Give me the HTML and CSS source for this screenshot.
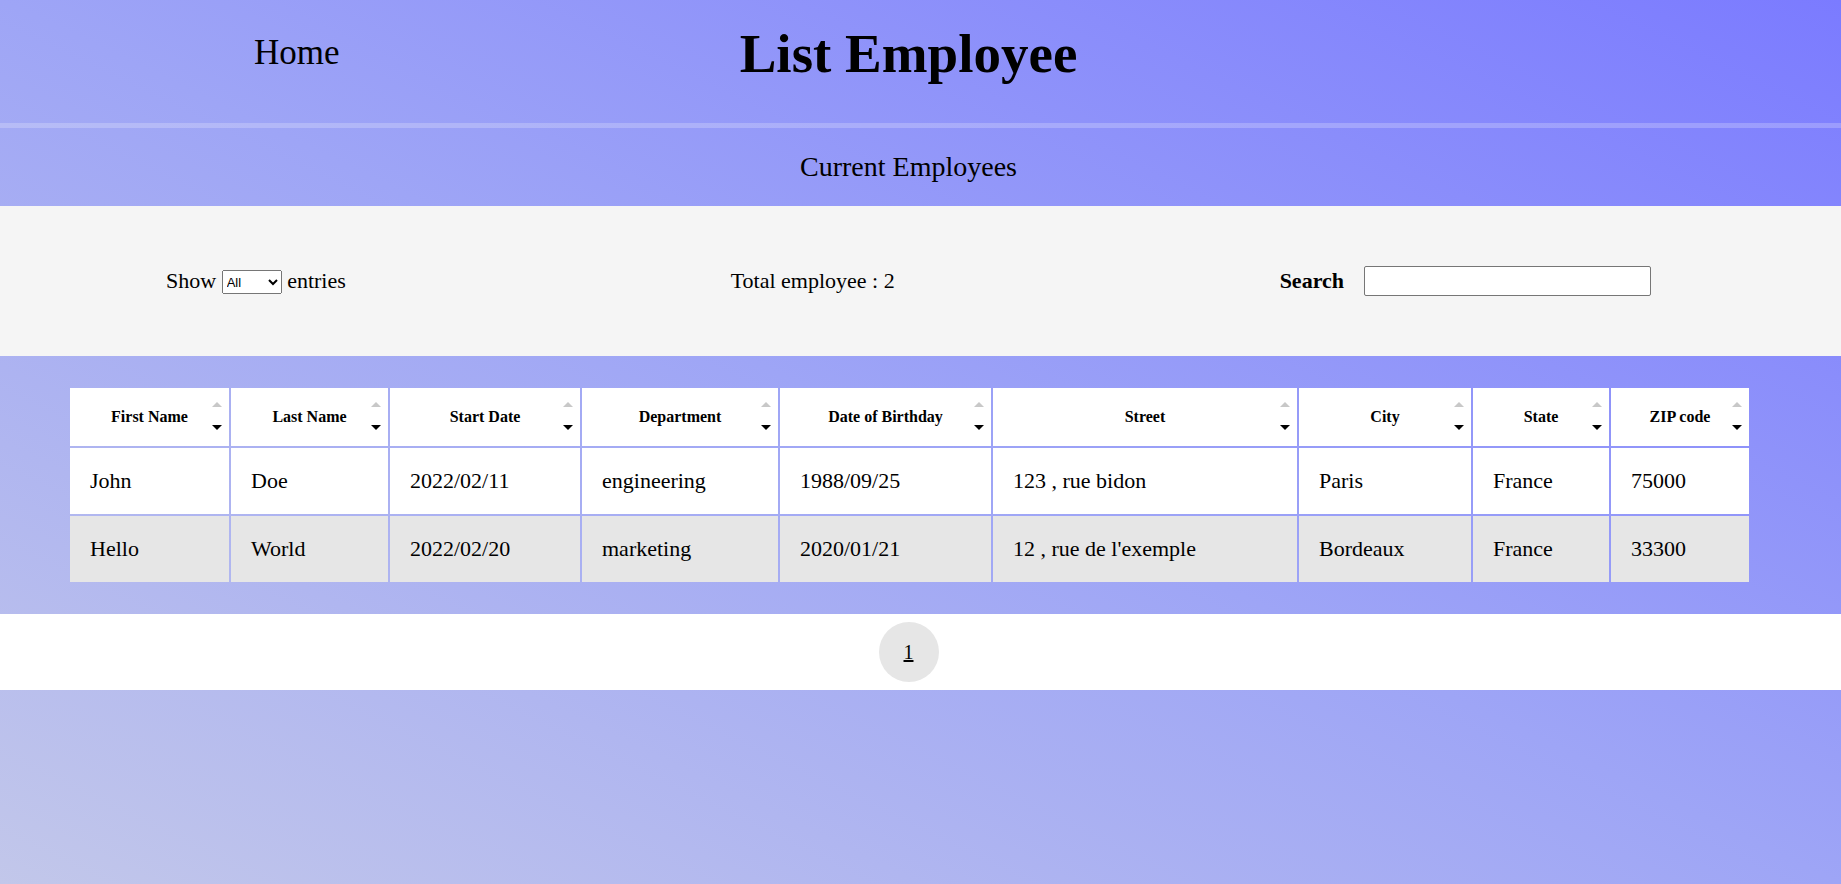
FILE: index.html
```html
<!DOCTYPE html>
<html lang="en">
<head>
<meta charset="utf-8">
<title>List Employee</title>
<link rel="stylesheet" href="styles.css">
</head>
<body>
<header class="top">
  <div class="top-nav"><a class="home-link" href="#">Home</a></div>
  <h1 class="title">List Employee</h1>
  <div class="top-spacer"></div>
</header>
<div class="divider"></div>
<h2 class="subtitle">Current Employees</h2>
<section class="controls">
  <label class="show">Show <select class="entries-select"><option>10</option><option>25</option><option>50</option><option selected>All</option></select> entries</label>
  <p class="total">Total employee : 2</p>
  <label class="search"><span>Search</span><input class="search-input" type="text"></label>
</section>
<section class="table-wrap">
  <table class="employees">
    <thead>
      <tr>
        <th class="col-first">First Name<span class="sort"></span></th>
        <th class="col-last">Last Name<span class="sort"></span></th>
        <th class="col-start">Start Date<span class="sort"></span></th>
        <th class="col-dept">Department<span class="sort"></span></th>
        <th class="col-birth">Date of Birthday<span class="sort"></span></th>
        <th class="col-street">Street<span class="sort"></span></th>
        <th class="col-city">City<span class="sort"></span></th>
        <th class="col-state">State<span class="sort"></span></th>
        <th class="col-zip">ZIP code<span class="sort"></span></th>
      </tr>
    </thead>
    <tbody>
      <tr>
        <td>John</td><td>Doe</td><td>2022/02/11</td><td>engineering</td><td>1988/09/25</td><td>123 , rue bidon</td><td>Paris</td><td>France</td><td>75000</td>
      </tr>
      <tr>
        <td>Hello</td><td>World</td><td>2022/02/20</td><td>marketing</td><td>2020/01/21</td><td>12 , rue de l'exemple</td><td>Bordeaux</td><td>France</td><td>33300</td>
      </tr>
    </tbody>
  </table>
</section>
<nav class="pagination"><a class="page" href="#">1</a></nav>
</body>
</html>
```
FILE: styles.css
```css
html {
  min-height: 100%;
  background: linear-gradient(to top right, #c2c7ea 0%, #9ea5f6 50%, #7b7bff 100%);
}

body {
  margin: 0;
  font-family: "Liberation Serif", "Times New Roman", serif;
  color: #000;
}

.top {
  display: grid;
  grid-template-columns: 1fr 1fr 1fr;
  align-items: start;
  height: 123px;
  padding-right: 24px;
  box-sizing: border-box;
}

.top-nav {
  padding-top: 33px;
  padding-right: 12px;
  text-align: center;
}

.home-link {
  font-size: 35px;
  color: #000;
  text-decoration: none;
}

.title {
  margin: 22px 0 0;
  font-size: 55px;
  font-weight: bold;
  text-align: center;
  white-space: nowrap;
}

.divider {
  height: 5px;
  background: rgba(255, 255, 255, 0.22);
}

.subtitle {
  margin: 0;
  height: 78px;
  display: flex;
  align-items: center;
  justify-content: center;
  padding-right: 24px;
  font-size: 28px;
  font-weight: normal;
}

.controls {
  height: 150px;
  background: #f5f5f5;
  display: flex;
  align-items: center;
  justify-content: space-between;
  padding: 0 190px 0 166px;
  font-size: 22px;
}

.entries-select {
  width: 60px;
  height: 24px;
  font-family: "Liberation Sans", Arial, sans-serif;
  font-size: 13px;
  vertical-align: middle;
  margin: 0;
}

.total {
  margin: 0;
}

.search {
  display: flex;
  align-items: center;
  gap: 20px;
  font-weight: bold;
  font-size: 22px;
}

.search-input {
  width: 287px;
  height: 30px;
  box-sizing: border-box;
  border: 1px solid #767676;
  border-radius: 2px;
  background: #fff;
  margin: 0;
}

.table-wrap {
  padding: 30px 22px 30px 0;
}

.employees {
  margin: 0 auto;
  width: 1683px;
  table-layout: fixed;
  border-collapse: separate;
  border-spacing: 2px;
}

.employees th,
.employees td {
  box-sizing: border-box;
  background: #fff;
}

.employees th {
  position: relative;
  height: 58px;
  padding: 0 4px;
  font-size: 16px;
  font-weight: bold;
  text-align: center;
}

.employees td {
  height: 66px;
  padding: 0 18px 0 20px;
  font-size: 22px;
  text-align: left;
  white-space: nowrap;
}

.employees tbody tr:nth-child(even) td {
  background: #e6e6e6;
}

.col-first { width: 159px; }
.col-last { width: 157px; }
.col-start { width: 190px; }
.col-dept { width: 196px; }
.col-birth { width: 211px; }
.col-street { width: 304px; }
.col-city { width: 172px; }
.col-state { width: 136px; }
.col-zip { width: 138px; }

.sort {
  position: absolute;
  right: 7px;
  top: 14px;
  width: 10px;
  height: 28px;
}

.sort::before,
.sort::after {
  content: "";
  position: absolute;
  left: 0;
  width: 0;
  height: 0;
  border-left: 5px solid transparent;
  border-right: 5px solid transparent;
}

.sort::before {
  top: 0;
  border-bottom: 5px solid #c8c8c8;
}

.sort::after {
  top: 23px;
  border-top: 5px solid #000;
}

.pagination {
  background: #fff;
  padding: 8px 24px 8px 0;
  display: flex;
  justify-content: center;
}

.page {
  width: 60px;
  height: 60px;
  border-radius: 50%;
  background: #e6e6e6;
  display: flex;
  align-items: center;
  justify-content: center;
  color: #000;
  font-size: 20px;
  text-decoration: underline;
}
```
